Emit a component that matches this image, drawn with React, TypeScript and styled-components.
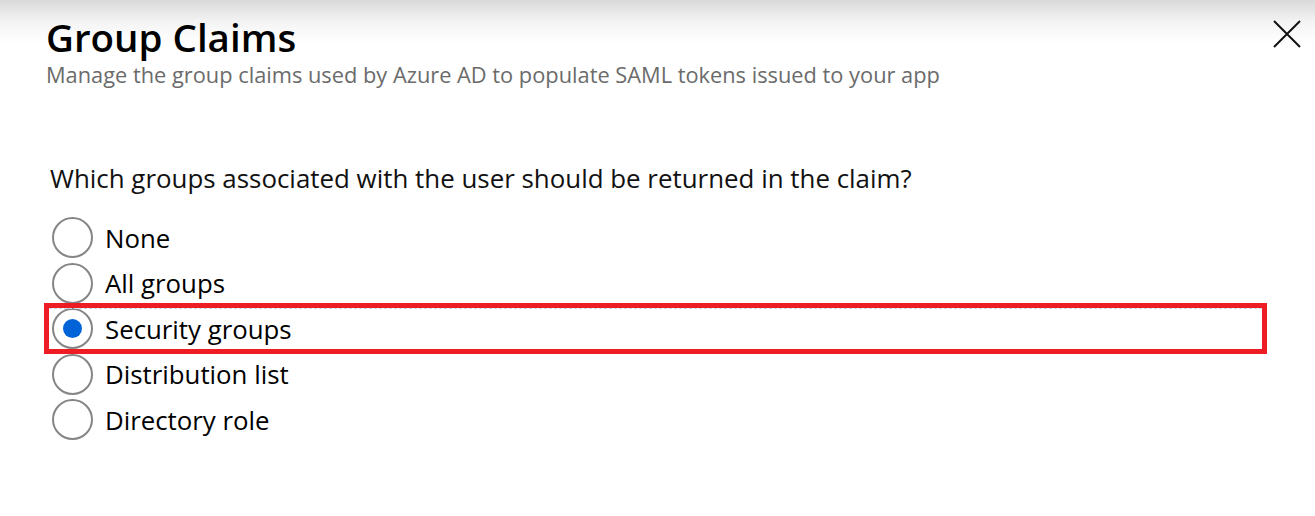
import {createGlobalStyle, styled} from "styled-components";

const GlobalStyle = createGlobalStyle`
  html, body {
    margin: 0;
    padding: 0;
    background: #ffffff;
  }
  body {
    font-family: "Open Sans", "Liberation Sans", sans-serif;
    color: #000000;
  }
`;

const Panel = styled.div`
  width: 1315px;
  height: 516px;
  background: #ffffff;
  overflow: hidden;
`;

const Header = styled.header`
  display: flex;
  justify-content: space-between;
  align-items: flex-start;
  padding: 14px 12px 0 46px;
  background: linear-gradient(#d9d9d9 0px, #f4f4f4 22px, #ffffff 44px);
`;

const TitleBlock = styled.div`
  display: flex;
  flex-direction: column;
`;

const Title = styled.h1`
  margin: 0;
  font-size: 38.5px;
  font-weight: 600;
  line-height: 46px;
  color: #000000;
`;

const Subtitle = styled.p`
  margin: 0;
  font-size: 21.8px;
  line-height: 30px;
  color: #6b6b6b;
`;

const CloseButton = styled.button`
  display: flex;
  align-items: center;
  justify-content: center;
  width: 32px;
  height: 32px;
  margin-top: 4px;
  padding: 0;
  border: none;
  background: transparent;
  cursor: pointer;
`;

const Body = styled.section`
  padding: 72px 0 0 50px;
`;

const Question = styled.p`
  margin: 0 0 21px;
  font-size: 25.9px;
  line-height: 32px;
  color: #111111;
`;

const RadioList = styled.div`
  display: flex;
  flex-direction: column;
`;

const Row = styled.label<{marked: boolean}>`
  position: relative;
  display: flex;
  align-items: center;
  gap: 12px;
  height: 45.5px;
  padding-left: 2px;
  font-size: 25.8px;
  color: #000000;
  cursor: pointer;
  &::after {
    content: "";
    display: ${(props) => (props.marked ? "block" : "none")};
    position: absolute;
    left: -6px;
    top: -3px;
    width: 1223px;
    height: 51px;
    box-sizing: border-box;
    border: 5px solid #ee1c25;
    pointer-events: none;
  }
  &::before {
    content: "";
    display: ${(props) => (props.marked ? "block" : "none")};
    position: absolute;
    left: -1px;
    top: 2px;
    width: 1213px;
    border-top: 1px dashed #c6dbe6;
    pointer-events: none;
  }
`;

const Circle = styled.span<{checked: boolean}>`
  display: flex;
  align-items: center;
  justify-content: center;
  flex: none;
  width: 41px;
  height: 41px;
  box-sizing: border-box;
  border: 2px solid #858585;
  border-radius: 50%;
  background: #ffffff;
  &::after {
    content: "";
    display: ${(props) => (props.checked ? "block" : "none")};
    width: 19px;
    height: 19px;
    border-radius: 50%;
    background: #0063d8;
  }
`;

const options = [
  "None",
  "All groups",
  "Security groups",
  "Distribution list",
  "Directory role",
];

export default function App() {
  const selected = "Security groups";
  return (
    <Panel>
      <GlobalStyle />
      <Header>
        <TitleBlock>
          <Title>Group Claims</Title>
          <Subtitle>
            Manage the group claims used by Azure AD to populate SAML tokens
            issued to your app
          </Subtitle>
        </TitleBlock>
        <CloseButton aria-label="Close">
          <svg width="28" height="28" viewBox="0 0 28 28">
            <path
              d="M1 1 L27 27 M27 1 L1 27"
              stroke="#111111"
              strokeWidth="2"
              fill="none"
            />
          </svg>
        </CloseButton>
      </Header>
      <Body>
        <Question>
          Which groups associated with the user should be returned in the claim?
        </Question>
        <RadioList>
          {options.map((option) => (
            <Row key={option} marked={option === selected}>
              <Circle checked={option === selected} />
              {option}
            </Row>
          ))}
        </RadioList>
      </Body>
    </Panel>
  );
}
